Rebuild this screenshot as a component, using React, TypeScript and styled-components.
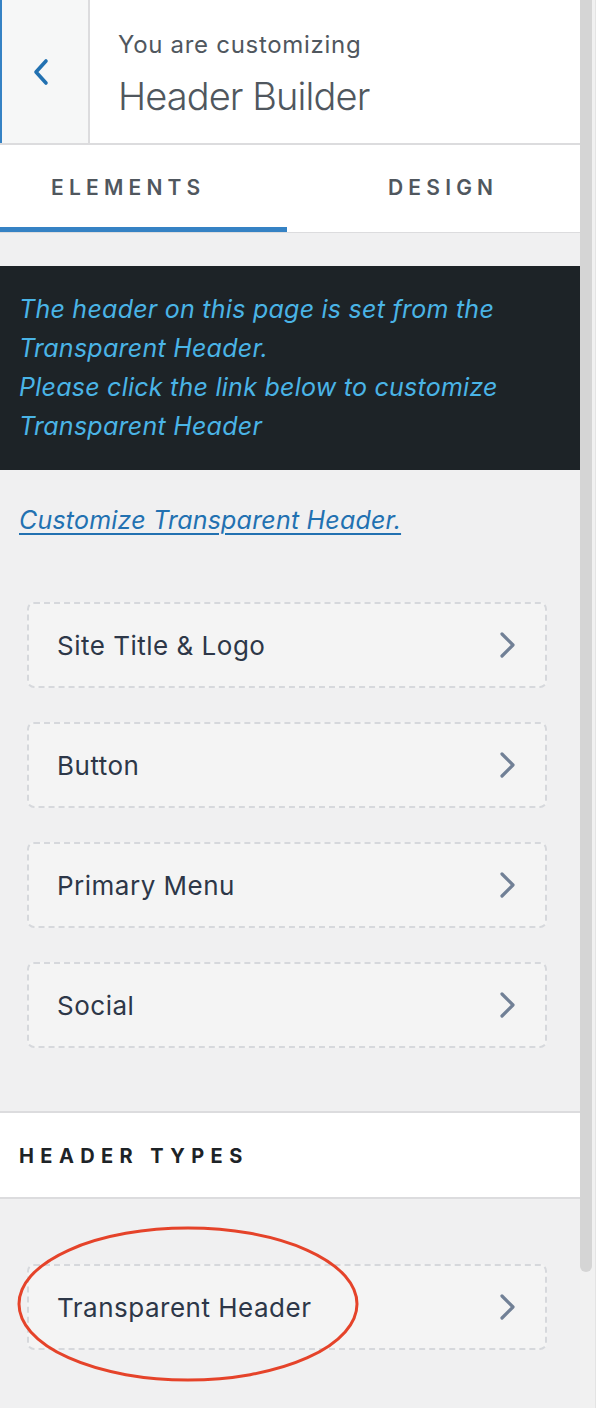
import React from "react";
import styled, { createGlobalStyle } from "styled-components";

const Global = createGlobalStyle`
  html, body { margin: 0; padding: 0; background: #f0f0f1; }
  body { font-family: Inter, "Noto Sans", "Liberation Sans", sans-serif; }
  * { box-sizing: border-box; }
`;

const Frame = styled.div`
  display: flex;
  width: 596px;
  height: 1408px;
  overflow: hidden;
  background: #f0f0f1;
`;

const Panel = styled.div`
  position: relative;
  width: 580px;
  display: flex;
  flex-direction: column;
`;

const ScrollTrack = styled.div`
  width: 16px;
  background: #f1f1f1;
  padding-right: 3px;
  border-right: 1px solid #e4e4e4;
`;

const ScrollThumb = styled.div`
  width: 12px;
  height: 1272px;
  background: #d5d5d5;
  border-radius: 0 0 6px 6px;
`;

const Header = styled.div`
  display: flex;
  height: 145px;
  background: #fff;
  border-bottom: 2px solid #dcdcde;
`;

const BackButton = styled.button`
  width: 90px;
  flex: none;
  display: flex;
  align-items: center;
  justify-content: center;
  background: #f6f7f7;
  border: none;
  border-left: 2px solid #3582c4;
  border-right: 2px solid #dcdcde;
  padding: 0 9px 0 0;
  color: #2271b1;
`;

const TitleBlock = styled.div`
  display: flex;
  flex-direction: column;
  padding: 28px 0 0 28px;
`;

const Eyebrow = styled.span`
  font-size: 24px;
  line-height: 34px;
  color: #50575e;
  letter-spacing: 0.7px;
`;

const Title = styled.span`
  margin-top: 11px;
  font-size: 38px;
  font-weight: 300;
  line-height: 46px;
  color: #50575e;
  letter-spacing: -0.9px;
`;

const Tabs = styled.div`
  display: flex;
  height: 88px;
  background: #fff;
  border-bottom: 1px solid #dcdcde;
`;

const Tab = styled.button<{ $active?: boolean; $w: number; $pl: number }>`
  width: ${(p) => p.$w}px;
  display: flex;
  align-items: center;
  padding: 2px 0 0 ${(p) => p.$pl}px;
  background: none;
  border: none;
  border-bottom: 5px solid ${(p) => (p.$active ? "#3582c4" : "transparent")};
  font-family: inherit;
  font-size: 21px;
  font-weight: 600;
  letter-spacing: 5.2px;
  color: #50575e;
`;

const Notice = styled.div`
  margin-top: 33px;
  background: #1d2327;
  padding: 24px 19px;
  font-size: 25px;
  line-height: 39px;
  font-style: italic;
  letter-spacing: 0.25px;
  color: #4ab4e6;
`;

const Link = styled.a`
  display: block;
  margin: 31px 0 0 19px;
  font-size: 25px;
  line-height: 39px;
  font-style: italic;
  letter-spacing: 0.2px;
  color: #2271b1;
  text-decoration: underline;
  text-underline-offset: 4px;
  text-decoration-thickness: 1.5px;
`;

const ItemList = styled.div<{ $mt: number }>`
  display: flex;
  flex-direction: column;
  gap: 34px;
  margin: ${(p) => p.$mt}px 33px 0 27px;
`;

const Item = styled.div`
  height: 86px;
  display: flex;
  align-items: center;
  justify-content: space-between;
  padding: 0 28px;
  background: #f4f4f4;
  border: 2px dashed #d6d8dc;
  border-radius: 7px;
  font-size: 26px;
  letter-spacing: 0.5px;
  color: #2d3748;
`;

const Chevron = styled.svg`
  width: 18px;
  height: 28px;
  color: #718096;
`;

const SectionHead = styled.div`
  margin-top: 63px;
  height: 88px;
  background: #fff;
  border-top: 2px solid #dcdcde;
  border-bottom: 2px solid #dcdcde;
  display: flex;
  align-items: center;
  padding: 2px 0 0 19px;
  font-size: 20px;
  font-weight: 700;
  letter-spacing: 6.4px;
  color: #1d2327;
`;

const Highlight = styled.svg`
  position: absolute;
  left: 16px;
  top: 1225px;
  width: 344px;
  height: 158px;
  pointer-events: none;
`;

const ChevronRight = () => (
  <Chevron viewBox="0 0 18 28" fill="none">
    <path d="M3 3 L14 14 L3 25" stroke="currentColor" strokeWidth="3.2" strokeLinecap="round" strokeLinejoin="round" />
  </Chevron>
);

const elements = ["Site Title & Logo", "Button", "Primary Menu", "Social"];

export default function App() {
  return (
    <>
      <Global />
      <Frame>
        <Panel>
          <Header>
            <BackButton aria-label="Back">
              <svg width="18" height="30" viewBox="0 0 18 30" fill="none">
                <path d="M14 4 L4 15 L14 26" stroke="currentColor" strokeWidth="3.6" strokeLinecap="round" strokeLinejoin="round" />
              </svg>
            </BackButton>
            <TitleBlock>
              <Eyebrow>You are customizing</Eyebrow>
              <Title>Header Builder</Title>
            </TitleBlock>
          </Header>
          <Tabs>
            <Tab $active $w={287} $pl={51}>ELEMENTS</Tab>
            <Tab $w={293} $pl={101}>DESIGN</Tab>
          </Tabs>
          <Notice>
            The header on this page is set from the
            <br />
            Transparent Header.
            <br />
            Please click the link below to customize
            <br />
            Transparent Header
          </Notice>
          <Link href="#">Customize Transparent Header.</Link>
          <ItemList $mt={62}>
            {elements.map((e) => (
              <Item key={e}>
                <span>{e}</span>
                <ChevronRight />
              </Item>
            ))}
          </ItemList>
          <SectionHead>HEADER TYPES</SectionHead>
          <ItemList $mt={65}>
            <Item>
              <span>Transparent Header</span>
              <ChevronRight />
            </Item>
          </ItemList>
          <Highlight viewBox="0 0 344 158">
            <ellipse cx="172" cy="79" rx="169" ry="76" fill="none" stroke="#e5432a" strokeWidth="3" />
          </Highlight>
        </Panel>
        <ScrollTrack>
          <ScrollThumb />
        </ScrollTrack>
      </Frame>
    </>
  );
}
